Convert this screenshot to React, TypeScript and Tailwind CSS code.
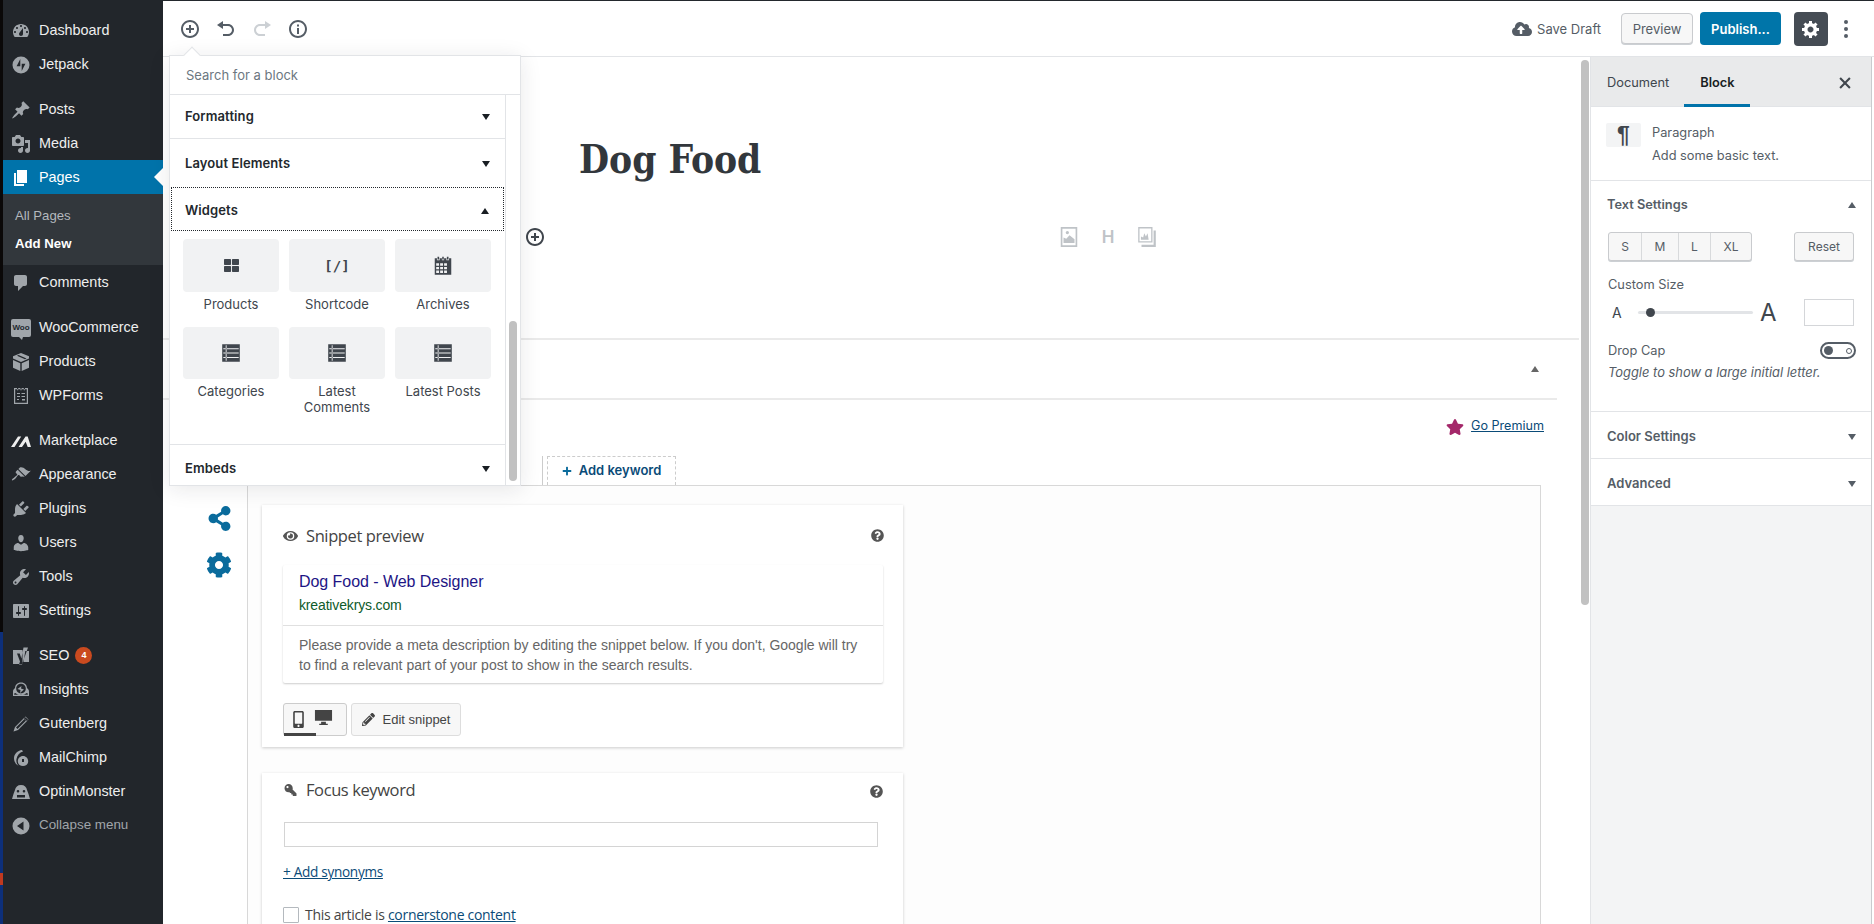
import React from "react";
import { FaCloudUploadAlt, FaEye, FaQuestionCircle, FaPencilAlt, FaMobileAlt, FaShareAlt, FaCog, FaStar, FaPlus, FaKey, FaThLarge } from "react-icons/fa";

const D = ({ d, className = "" }: { d: string; className?: string }) => (
  <svg viewBox="0 0 20 20" fill="currentColor" className={className}><path d={d} fillRule="evenodd" /></svg>
);

const P = {
  dash: "M3.76 16h12.48c1.1-1.37 1.76-3.11 1.76-5 0-4.42-3.58-8-8-8s-8 3.58-8 8c0 1.89.66 3.63 1.76 5zM10 4c.55 0 1 .45 1 1s-.45 1-1 1-1-.45-1-1 .45-1 1-1zM6 6c.55 0 1 .45 1 1s-.45 1-1 1-1-.45-1-1 .45-1 1-1zm8 0c.55 0 1 .45 1 1s-.45 1-1 1-1-.45-1-1 .45-1 1-1zm-5.37 5.55L12 7v6c0 1.1-.9 2-2 2s-2-.9-2-2c0-.57.24-1.08.63-1.45zM4 10c.55 0 1 .45 1 1s-.45 1-1 1-1-.45-1-1 .45-1 1-1zm12 0c.55 0 1 .45 1 1s-.45 1-1 1-1-.45-1-1 .45-1 1-1z",
  jet: "M10 1.5a8.5 8.5 0 1 0 0 17 8.5 8.5 0 0 0 0-17zM9.3 11.3H5.6l3.7-7.2zm1.4 4.6v-7.2h3.7z",
  post: "M10.44 3.02l1.82-1.82 6.36 6.35-1.83 1.82c-1.05-.68-2.48-.57-3.41.36l-.75.75c-.92.93-1.04 2.35-.35 3.41l-1.83 1.82-2.41-2.41-2.8 2.79c-.42.42-3.38 2.71-3.8 2.29s1.86-3.39 2.28-3.81l2.79-2.79L4.1 9.36l1.83-1.82c1.05.69 2.48.57 3.4-.36l.75-.75c.93-.92 1.05-2.35.36-3.41z",
  media: "M13 11V4c0-.55-.45-1-1-1h-1.67L9 1H5L3.67 3H2c-.55 0-1 .45-1 1v7c0 .55.45 1 1 1h10c.55 0 1-.45 1-1zM7 4.5c1.38 0 2.5 1.12 2.5 2.5S8.38 9.5 7 9.5 4.5 8.38 4.5 7 5.62 4.5 7 4.5zM14 6h5v10.5c0 1.38-1.12 2.5-2.5 2.5S14 17.88 14 16.5s1.12-2.5 2.5-2.5c.17 0 .34.02.5.05V9h-3V6zm-4 8.05V13h2v3.5c0 1.38-1.12 2.5-2.5 2.5S7 17.88 7 16.5 8.12 14 9.5 14c.17 0 .34.02.5.05z",
  page: "M6 15V2h10v13H6zm-1 1h8v2H3V5h2v11z",
  comment: "M5 2h9c1.1 0 2 .9 2 2v7c0 1.1-.9 2-2 2h-2l-5 5v-5H5c-1.1 0-2-.9-2-2V4c0-1.1.9-2 2-2z",
  box: "M10 1l8 3.2v2.2L10 10 2 6.4V4.200zM2 8l7.300 3.300V19L2 15.700zM18 8v7.700L10.700 19v-7.700zM6 3.700l8 3.500 1.500-.7-8-3.500z",
  form: "M3 2h14v16H3zM4.200 3.200v13.600h11.600V3.200zM6 2v2.200h1.200V2zm3.400 0v2.200h1.200V2zm3.400 0v2.200H14V2zM6 7h3v1H6zm4.500 0H14v1h-3.500zM6 10h3v1H6zm4.500 0H14v1h-3.500zM6 13h2v1H6zm5 0h3v1.500h-3z",
  market: "M0 16L7 5.500h3.200L3.500 16zM7.500 16L14.500 5.500h2.200L20 16h-3.300l-2-5.200L11 16z",
  brush: "M14.48 11.06L7.41 3.99l1.5-1.5c.5-.56 2.3-.47 3.51.32 1.21.8 1.43 1.28 2.91 2.1 1.18.64 2.45 1.26 4.45.85zm-.71.71L6.7 4.7 4.93 6.47c-.39.39-.39 1.02 0 1.41l1.06 1.06c.39.39.39 1.03 0 1.42-.6.6-1.43 1.11-2.21 1.69-.35.26-.7.53-1.01.84C1.43 13.23.5 14.84 1 15.34c.5.5 2.110-.43 3.440-1.760.31-.31.58-.66.84-1.010.58-.78 1.090-1.610 1.690-2.210.39-.39 1.020-.39 1.410 0l1.060 1.060c.39.39 1.020.39 1.410 0z",
  plug: "M13.11 4.36L9.87 7.6 8 5.730l3.240-3.240c.35-.34 1.050-.2 1.560.32.52.51.66 1.210.31 1.550zm-8 1.770l.91-1.120 9.010 9.010-1.190.84c-.71.71-2.630 1.160-3.820 1.160H6.140L4.900 17.260c-.59.59-1.540.59-2.120 0-.59-.58-.59-1.530 0-2.120l1.240-1.240v-3.880c0-1.130.4-3.190 1.090-3.890zm7.260 3.970l3.240-3.240c.34-.35 1.040-.21 1.550.31.52.51.66 1.210.31 1.550l-3.240 3.250z",
  user: "M10 9.250c-2.270 0-2.730-3.440-2.730-3.440C7 4.020 7.820 2 9.970 2c2.160 0 2.980 2.020 2.710 3.810 0 0-.41 3.440-2.680 3.440zm0 2.570L12.720 10c2.390 0 4.520 2.330 4.520 4.530v2.490s-3.650 1.130-7.240 1.130c-3.650 0-7.240-1.130-7.240-1.130v-2.490c0-2.250 1.940-4.480 4.470-4.480z",
  tool: "M16.680 9.770c-1.340 1.340-3.300 1.670-4.950.99l-5.410 6.520c-.99.99-2.590.99-3.580 0s-.99-2.590 0-3.570l6.520-5.420c-.68-1.650-.35-3.610.99-4.950 1.280-1.280 3.120-1.620 4.720-1.060l-2.890 2.890 2.820 2.820 2.860-2.870c.53 1.580.18 3.390-1.080 4.650zM3.810 16.210c.4.39 1.040.39 1.430 0 .4-.4.4-1.040 0-1.430-.39-.4-1.030-.4-1.430 0-.39.39-.39 1.030 0 1.430z",
  set: "M18 16V4c0-.55-.45-1-1-1H3c-.55 0-1 .45-1 1v12c0 .55.45 1 1 1h14c.55 0 1-.45 1-1zM8 11h1c.55 0 1 .45 1 1s-.45 1-1 1H8v1.500c0 .28-.22.5-.5.5s-.5-.22-.5-.5V13H6c-.55 0-1-.45-1-1s.45-1 1-1h1V5.500c0-.28.22-.5.5-.5s.5.22.5.5V11zm5-2h-1c-.55 0-1-.45-1-1s.45-1 1-1h1V5.500c0-.28.22-.5.5-.5s.5.22.5.5V7h1c.55 0 1 .45 1 1s-.45 1-1 1h-1v5.500c0 .28-.22.5-.5.5s-.5-.22-.5-.5V9z",
  seo: "M2 4h9.500v14H2zM12.500 1.500H17L11 18.500H8l1-3L6 7.500h2.700l1.700 5zM14.300 5H18v11h-5.500z",
  insight: "M10 2.500c3.800 0 6 2.700 6 5.800 1.300.7 2 1.900 2 3.200v4.500H2v-4.500c0-1.300.7-2.500 2-3.200 0-3.100 2.200-5.800 6-5.800zm0 1.200c-3 0-4.800 2.200-4.800 4.800 0 2.700 2 4.800 4.800 4.800s4.800-2.100 4.800-4.800c0-2.600-1.800-4.800-4.800-4.800zM10.500 6l-4 3 3 1-.5 3 4-3.500-3-1zM3.200 14.800h13.600v-1.200l-1.200-.6c-1.300 1.300-3.300 2-5.600 2s-4.300-.7-5.600-2l-1.200.6z",
  pencil: "M14.500 2.500l3 3L7 16l-4.500 1.500L4 13zM13.500 5L5 13.500 6.500 15 15 6.500zM12.800 4l3.200 3 1-1.500-3-2.500z",
  chimp: "M11 2c-4.500.5-8 4-8 8.500 0 3.200 2 6 4.500 7.300C5.700 16 5 13.500 5.500 11c.6-3.500 3-6.500 6.500-7.500zM12 8c-3 0-5.200 2.400-5.200 5.200S9 18 12 18s5.200-2 5.200-4.800S15 8 12 8zm-1 3h2v3h-2z",
  monster: "M10 3c3.500 0 5.500 2 6 5l1.500 4 1.500 5H1l1.500-5L4 8c.5-3 2.500-5 6-5zM7 8a1.300 1.300 0 1 0 0 2.600A1.300 1.300 0 0 0 7 8zm6 0a1.300 1.300 0 1 0 0 2.600A1.300 1.300 0 0 0 13 8zM6 13v2.500h8V13z",
  collapse: "M10 1.500a8.500 8.500 0 1 0 0 17 8.500 8.500 0 0 0 0-17zM12.500 5.500v9L6 10z",
  insert: "M10 1c-5 0-9 4-9 9s4 9 9 9 9-4 9-9-4-9-9-9zm0 16c-3.900 0-7-3.100-7-7s3.100-7 7-7 7 3.100 7 7-3.100 7-7 7zm1-11H9v3H6v2h3v3h2v-3h3V9h-3V6z",
  undo: "M12 5H7V2L1 6l6 4V7h5c2.200 0 4 1.800 4 4s-1.800 4-4 4H7v2h5c3.300 0 6-2.700 6-6s-2.700-6-6-6z",
  redo: "M8 5h5V2l6 4-6 4V7H8c-2.200 0-4 1.800-4 4s1.800 4 4 4h5v2H8c-3.300 0-6-2.700-6-6s2.700-6 6-6z",
  info: "M10 1c-5 0-9 4-9 9s4 9 9 9 9-4 9-9-4-9-9-9zm0 16c-3.900 0-7-3.100-7-7s3.100-7 7-7 7 3.100 7 7-3.100 7-7 7zM9 9h2v6H9zM9 5.500h2v2H9z",
  gear: "M18 12h-2.180c-.17.7-.44 1.350-.81 1.930l1.540 1.540-2.100 2.100-1.540-1.540c-.58.36-1.230.63-1.910.79V19H8v-2.180c-.68-.16-1.330-.43-1.910-.79l-1.540 1.540-2.120-2.120 1.540-1.540c-.36-.58-.63-1.230-.79-1.910H1V9.030h2.170c.16-.7.44-1.350.8-1.940L2.430 5.550l2.100-2.100 1.540 1.540c.58-.37 1.240-.64 1.930-.81V2h3v2.180c.68.16 1.330.43 1.910.79l1.540-1.540 2.120 2.120-1.540 1.540c.36.59.64 1.240.8 1.940H18V12zm-8.500 1.500c1.660 0 3-1.340 3-3s-1.340-3-3-3-3 1.340-3 3 1.340 3 3 3z",
  list: "M2 2h16v16H2zM3 5.600v.9h14v-.9zM3 9.600v.9h14v-.9zM3 13.600v.9h14v-.9zM5.200 3v14h.8V3z",
  cal: "M5 1.500h1.500V4H5zM9.300 1.500h1.400V4H9.300zM13.500 1.500H15V4h-1.500zM2.500 3h2v1.800h2.500V3h2v1.800h2V3h2v1.800h2.500V3h2v15h-15zM3.800 7.500v2.200h2.600V7.500zm3.600 0v2.200h2.600V7.500zm3.600 0v2.200h2.600V7.500zM3.800 10.800V13h2.600v-2.200zm3.600 0V13h2.600v-2.200zm3.600 0V13h2.600v-2.200zM3.800 14v2.300h2.600V14zm3.600 0v2.300h2.600V14zm3.600 0v2.300h2.600V14z",
  img: "M2.500 1h15v18h-15zM4 2.500v15h12v-15zM5 15.500v-5l2.500 1 3-3 4.500 3.500v3.500zM8.500 4.500a1.500 1.500 0 1 1 0 3 1.500 1.500 0 0 1 0-3z",
  gal: "M2 1h13v14H2zM3.200 2.200v11.600h10.600V2.200zM16 4h2v15H5v-2h11zM4.500 12.500V9.500l2 1 1-4 1.500 3 1.500-3 1 6z",
  desk: "M1 2h18v11.500H1zM7.500 14.500h5V16.500h2V18h-9v-1.500h2z",
};

const Woo = () => (
  <span className="relative flex h-[18px] w-[20px] items-center justify-center rounded-[2px] bg-[#a0a5aa] font-['Liberation_Sans',sans-serif] text-[8px] font-bold leading-none text-[#23282d]">
    Woo
    <span className="absolute bottom-[-3px] left-[8px] h-0 w-0 border-l-[3px] border-r-[1px] border-t-[3px] border-l-transparent border-r-transparent border-t-[#a0a5aa]" />
  </span>
);

type Row = { label: string; icon?: string; woo?: boolean; badge?: boolean; bright?: boolean };
const groupA: Row[] = [{ label: "Dashboard", icon: P.dash }, { label: "Jetpack", icon: P.jet }];
const groupB: Row[] = [{ label: "Posts", icon: P.post }, { label: "Media", icon: P.media }];
const groupC: Row[] = [{ label: "WooCommerce", woo: true }, { label: "Products", icon: P.box }, { label: "WPForms", icon: P.form }];
const groupD: Row[] = [
  { label: "Marketplace", icon: P.market, bright: true }, { label: "Appearance", icon: P.brush }, { label: "Plugins", icon: P.plug },
  { label: "Users", icon: P.user }, { label: "Tools", icon: P.tool }, { label: "Settings", icon: P.set },
];
const groupE: Row[] = [
  { label: "SEO", icon: P.seo, badge: true }, { label: "Insights", icon: P.insight }, { label: "Gutenberg", icon: P.pencil },
  { label: "MailChimp", icon: P.chimp }, { label: "OptinMonster", icon: P.monster },
];

const MenuRow = ({ r }: { r: Row }) => (
  <div className="flex h-[34px] items-center pt-[1px] text-[14.4px] text-[#eeeeee]">
    <span className={`flex w-[36px] justify-center ${r.bright ? "text-[#eeeeee]" : "text-[#a0a5aa]"}`}>
      {r.woo ? <Woo /> : <D d={r.icon!} className="h-[20px] w-[20px]" />}
    </span>
    <span>{r.label}</span>
    {r.badge && (
      <span className="ml-[6px] flex h-[17px] w-[17px] items-center justify-center rounded-full bg-[#ca4a1f] text-[9px] font-bold text-white">4</span>
    )}
  </div>
);

const AdminMenu = () => (
  <div className="flex w-[160px] shrink-0 flex-col bg-[#22262b] pt-[13px] font-['Liberation_Sans',sans-serif]">
    {groupA.map((r) => <MenuRow key={r.label} r={r} />)}
    <div className="h-[11px]" />
    {groupB.map((r) => <MenuRow key={r.label} r={r} />)}
    <div className="relative flex h-[34px] items-center bg-[#0073aa] pt-[1px] text-[14.4px] text-white">
      <span className="flex w-[36px] justify-center"><D d={P.page} className="h-[20px] w-[20px]" /></span>
      <span>Pages</span>
      <span className="absolute right-0 top-[8px] h-0 w-0 border-y-[9px] border-r-[9px] border-y-transparent border-r-white" />
    </div>
    <div className="h-[71px] bg-[#32373c] pl-[12px] pt-[12px] text-[13.2px]">
      <div className="h-[28px] leading-[20px] text-[#b4b9be]">All Pages</div>
      <div className="font-bold leading-[20px] text-white">Add New</div>
    </div>
    <MenuRow r={{ label: "Comments", icon: P.comment }} />
    <div className="h-[11px]" />
    {groupC.map((r) => <MenuRow key={r.label} r={r} />)}
    <div className="h-[11px]" />
    {groupD.map((r) => <MenuRow key={r.label} r={r} />)}
    <div className="h-[11px]" />
    {groupE.map((r) => <MenuRow key={r.label} r={r} />)}
    <div className="flex h-[34px] items-center pt-[1px] text-[13.4px] text-[#a0a5aa]">
      <span className="flex w-[36px] justify-center"><D d={P.collapse} className="h-[20px] w-[20px]" /></span>
      <span>Collapse menu</span>
    </div>
  </div>
);

const Chevron = ({ up = false, className = "" }: { up?: boolean; className?: string }) => (
  <span className={`h-0 w-0 border-x-[4px] border-x-transparent ${up ? "border-b-[6px] border-b-current" : "border-t-[6px] border-t-current"} ${className}`} />
);

const TopBar = () => (
  <div className="flex h-[56px] shrink-0 items-center border-b border-[#e2e4e7] bg-white pl-[17px] pr-[26px]">
    <div className="flex items-center gap-[16px] text-[#555d66]">
      <D d={P.insert} className="h-[20px] w-[20px]" />
      <D d={P.undo} className="h-[20px] w-[20px]" />
      <D d={P.redo} className="h-[20px] w-[20px] text-[#ccd0d4]" />
      <D d={P.info} className="h-[20px] w-[20px]" />
    </div>
    <div className="ml-auto flex items-center text-[13px] text-[#555d66]">
      <FaCloudUploadAlt className="mr-[5px] h-[20px] w-[20px]" />
      <span className="pt-[2px]">Save Draft</span>
      <span className="ml-[20px] flex h-[31px] w-[72px] items-center justify-center rounded-[4px] border border-[#c9cbce] bg-[#f7f7f7] pt-[2px] shadow-[0_1px_0_#ccd0d4]">Preview</span>
      <span className="ml-[7px] flex h-[33px] w-[81px] items-center justify-center rounded-[4px] bg-[#0075a9] pt-[2px] font-semibold text-white">Publish...</span>
      <span className="ml-[13px] flex h-[34px] w-[34px] items-center justify-center rounded-[4px] bg-[#454c54] text-white"><D d={P.gear} className="h-[20px] w-[20px]" /></span>
      <span className="ml-[16px] flex flex-col gap-[3px]">
        <span className="h-[4px] w-[4px] rounded-full bg-[#555d66]" />
        <span className="h-[4px] w-[4px] rounded-full bg-[#555d66]" />
        <span className="h-[4px] w-[4px] rounded-full bg-[#555d66]" />
      </span>
    </div>
  </div>
);

const Section = ({ title, up, className = "" }: { title: string; up?: boolean; className?: string }) => (
  <div className={`flex items-center justify-between pl-[15px] pr-[15px] text-[13px] font-semibold tracking-[0.1px] text-[#23282d] ${className}`}>
    <span>{title}</span>
    <Chevron up={up} className="text-[#191e23]" />
  </div>
);

const Tile = ({ icon, label, svg, h = "h-[53px]" }: { icon?: string; label: string; svg?: React.ReactNode; h?: string }) => (
  <div className="flex w-[96px] flex-col items-center">
    <div className={`flex w-full items-center justify-center rounded-[4px] bg-[#f1f2f3] text-[#40464d] ${h}`}>
      {svg ?? <D d={icon!} className="h-[22px] w-[22px]" />}
    </div>
    <div className="mt-[4px] text-center text-[13px] leading-[16px] text-[#40464d]">{label}</div>
  </div>
);

const Inserter = () => (
  <div className="absolute left-[6px] top-[-2px] z-20 h-[431px] w-[352px] border border-[#e2e4e7] bg-white shadow-[0_3px_20px_rgba(25,30,35,0.1)]">
    <span className="absolute left-[16px] top-[-7px] h-[12px] w-[12px] rotate-45 border-l border-t border-[#e2e4e7] bg-white" />
    <div className="relative flex h-[39px] items-center border-b border-[#e2e4e7] pl-[16px] pt-[2px] text-[13px] text-[#6c7781]">Search for a block</div>
    <div className="relative h-[390px] overflow-hidden">
      <div className="w-[336px] border-r border-[#e2e4e7]">
        <Section title="Formatting" className="h-[44px] border-b border-[#e2e4e7]" />
        <Section title="Layout Elements" className="h-[48px] pt-[1px]" />
        <Section title="Widgets" up className="mx-[1px] h-[44px] border border-dotted border-[#23282d] !pl-[13px] !pr-[14px] pt-[3px]" />
        <div className="px-[13px] pt-[8px]">
          <div className="flex gap-[10px]">
            <Tile label="Products" svg={<FaThLarge className="h-[15px] w-[15px]" />} />
            <Tile label="Shortcode" svg={<span className="font-['DejaVu_Sans_Mono',monospace] text-[14px] font-bold leading-none">[/]</span>} />
            <Tile icon={P.cal} label="Archives" />
          </div>
          <div className="mt-[15px] flex h-[117px] gap-[10px]">
            <Tile icon={P.list} label="Categories" h="h-[52px]" />
            <Tile icon={P.list} label="Latest Comments" h="h-[52px]" />
            <Tile icon={P.list} label="Latest Posts" h="h-[52px]" />
          </div>
        </div>
        <Section title="Embeds" className="h-[48px] border-t border-[#e2e4e7]" />
      </div>
      <div className="absolute right-[3px] top-[226px] h-[160px] w-[8px] rounded-full bg-[#c1c1c1]" />
    </div>
  </div>
);

const SnippetCard = () => (
  <div className="h-[242px] w-[641px] bg-white pl-[21px] pr-[20px] pt-[17px] shadow-[0_1px_3px_rgba(0,0,0,0.2)] font-['Open_Sans',sans-serif]">
    <div className="flex h-[28px] items-center justify-between text-[#444444]">
      <div className="flex items-center">
        <FaEye className="mr-[8px] h-[14px] w-[15px] text-[#555]" />
        <span className="text-[16.5px] tracking-[-0.4px]">Snippet preview</span>
      </div>
      <FaQuestionCircle className="mr-[-1px] mt-[-2px] h-[13px] w-[13px] text-[#555]" />
    </div>
    <div className="mt-[15px] h-[118px] rounded-[2px] bg-white font-['Liberation_Sans',sans-serif] shadow-[0_1px_2px_rgba(0,0,0,0.2)]">
      <div className="h-[61px] border-b border-[#e0e0e0] px-[16px] pt-[7px]">
        <div className="text-[16px] leading-[20px] tracking-[-0.05px] text-[#1d1585]">Dog Food - Web Designer</div>
        <div className="mt-[4px] text-[14px] leading-[18px] tracking-[-0.15px] text-[#0d5a2a]">kreativekrys.com</div>
      </div>
      <div className="whitespace-nowrap px-[16px] pt-[9px] text-[14px] leading-[20px] text-[#666666]">
        <div>Please provide a meta description by editing the snippet below. If you don't, Google will try</div>
        <div>to find a relevant part of your post to show in the search results.</div>
      </div>
    </div>
    <div className="mt-[20px] flex gap-[4px]">
      <div className="relative flex h-[33px] w-[64px] items-center rounded-[3px] border border-[#ccc] bg-[#f7f7f7] text-[#444]">
        <FaMobileAlt className="ml-[8px] h-[17px] w-[13px]" />
        <D d={P.desk} className="ml-[9px] mt-[-5px] h-[19px] w-[19px]" />
        <span className="absolute bottom-[-1px] left-0 h-[3px] w-[32px] bg-[#444]" />
      </div>
      <div className="flex h-[33px] w-[110px] items-center justify-center rounded-[3px] border border-[#ddd] bg-[#f7f7f7] font-['Liberation_Sans',sans-serif] text-[13px] text-[#444]">
        <FaPencilAlt className="mr-[8px] h-[13px] w-[13px]" />Edit snippet
      </div>
    </div>
  </div>
);

const FocusCard = () => (
  <div className="mt-[26px] h-[200px] w-[641px] bg-white pl-[21px] pr-[20px] pt-[3px] shadow-[0_1px_3px_rgba(0,0,0,0.2)] font-['Open_Sans',sans-serif] text-[#444]">
    <div className="flex h-[28px] items-center justify-between">
      <div className="flex items-center">
        <FaKey className="mr-[8px] h-[12px] w-[15px] -scale-x-100 text-[#555]" />
        <span className="text-[16.5px] tracking-[-0.4px]">Focus keyword</span>
      </div>
      <FaQuestionCircle className="mt-[2px] h-[13px] w-[13px] text-[#555]" />
    </div>
    <div className="ml-[1px] mt-[18px] h-[25px] w-[594px] border border-[#d4d4d4]" />
    <div className="mt-[15px] text-[13.6px] leading-[20px] tracking-[-0.3px] text-[#0a4b78] underline">+ Add synonyms</div>
    <div className="mt-[22px] flex items-center text-[14px] tracking-[-0.3px]">
      <span className="mr-[6px] h-[16px] w-[16px] rounded-[1px] border border-[#b4b9be]" />
      <span>This article is&nbsp;</span><span className="text-[#0a4b78] underline">cornerstone content</span>
    </div>
  </div>
);

const Editor = () => (
  <div className="relative flex-1 overflow-hidden">
    <div className="h-[283px] border-b-2 border-[#eaeaea] pl-[416px]">
      <h1 className="pt-[78px] font-['DejaVu_Serif_Condensed','DejaVu_Serif',serif] text-[38.5px] font-bold leading-[50px] text-[#32373c]">Dog Food</h1>
    </div>
    <div className="absolute left-[362px] top-[170px] text-[#40464d]"><D d={P.insert} className="h-[20px] w-[20px]" /></div>
    <div className="absolute left-[895px] top-[169px] flex w-[110px] items-center gap-[18px] text-[#bfc3c7]">
      <D d={P.img} className="h-[22px] w-[22px]" />
      <span className="w-[20px] text-center text-[17px] font-semibold leading-[20px]">H</span>
      <D d={P.gal} className="h-[22px] w-[22px]" />
    </div>
    <div className="mr-[22px] flex h-[60px] items-center justify-end border-b-2 border-[#eaeaea] pr-[18px] text-[#666]">
      <Chevron up className="text-[#666]" />
    </div>
    <div className="flex">
      <div className="flex w-[84px] shrink-0 flex-col items-end gap-[21px] pr-[15px] pt-[59px] text-[#0a6b9c]">
        <D d={P.list} className="h-[26px] w-[26px] text-[#0a6b9c]" />
        <FaShareAlt className="h-[25px] w-[25px]" />
        <FaCog className="h-[26px] w-[26px]" />
      </div>
      <div className="w-[1294px] pt-[17px]">
        <div className="mr-[-3px] flex justify-end text-[12.6px] text-[#0a4b78]">
          <FaStar className="mr-[7px] mt-[1px] h-[18px] w-[18px] text-[#a4286a]" />
          <span className="underline">Go Premium</span>
        </div>
        <div className="mt-[20px] flex h-[29px] justify-start pl-[294px]">
          <div className="h-full w-[2px] border-r border-[#ccc]" />
          <div className="ml-[4px] flex h-full w-[129px] items-center justify-center gap-[7px] whitespace-nowrap border border-b-0 border-dashed border-[#ccc] text-[13px] font-semibold text-[#0a4b78]">
            <FaPlus className="h-[10px] w-[10px] text-[#0a6b9c]" />Add keyword
          </div>
        </div>
        <div className="h-[500px] border border-[#d8d8d8] bg-[#fdfdfd] pl-[14px] pt-[19px]">
          <SnippetCard />
          <FocusCard />
        </div>
      </div>
    </div>
  </div>
);

const PanelHead = ({ title, up }: { title: string; up?: boolean }) => (
  <div className="flex h-[47px] items-center justify-between border-b border-[#e2e4e7] pl-[16px] pr-[15px] pt-[3px] text-[13px] font-semibold text-[#555d66]">
    <span>{title}</span>
    <Chevron up={up} className="text-[#555d66]" />
  </div>
);

const Settings = () => (
  <div className="flex w-[280px] shrink-0 flex-col bg-[#f3f4f5] text-[12.8px] text-[#555d66]">
    <div className="bg-white">
      <div className="relative flex h-[50px] items-center border-b border-[#e2e4e7] bg-[#e9eaeb] pl-[16px] pr-[19px] pt-[3px]">
        <span className="text-[#40464d]">Document</span>
        <span className="ml-[31px] font-semibold text-[#191e23]">Block</span>
        <span className="absolute bottom-[-1px] left-[93px] h-[3px] w-[66px] bg-[#0073aa]" />
        <svg viewBox="0 0 20 20" className="ml-auto h-[14px] w-[14px]" stroke="#40464d" strokeWidth="3"><path d="M3 3l14 14M17 3L3 17" /></svg>
      </div>
      <div className="flex h-[74px] border-b border-[#e2e4e7] pl-[15px] pt-[16px]">
        <div className="flex h-[24px] w-[35px] items-center justify-center rounded-[2px] bg-[#f3f4f5] font-['Liberation_Sans',sans-serif] text-[23px] font-bold leading-none text-[#40464d]">¶</div>
        <div className="ml-[11px] mt-[-2px] leading-[23px]">
          <div>Paragraph</div>
          <div>Add some basic text.</div>
        </div>
      </div>
      <div className="h-[231px] border-b border-[#e2e4e7] pl-[16px] pr-[16px]">
        <div className="flex h-[47px] items-center justify-between font-semibold">
          <span>Text Settings</span><Chevron up className="mr-[-1px] text-[#555d66]" />
        </div>
        <div className="mt-[4px] flex items-start justify-between pl-[1px] pr-[1px]">
          <div className="flex h-[29px] rounded-[3px] border border-[#c9cbce] bg-[#f7f7f7] shadow-[0_1px_0_#ccd0d4] text-[12px]">
            <span className="flex w-[33px] items-center justify-center border-r border-[#d8dadc]">S</span>
            <span className="flex w-[37px] items-center justify-center border-r border-[#d8dadc]">M</span>
            <span className="flex w-[32px] items-center justify-center border-r border-[#d8dadc]">L</span>
            <span className="flex w-[40px] items-center justify-center">XL</span>
          </div>
          <span className="flex h-[29px] w-[60px] items-center justify-center rounded-[3px] border border-[#c9cbce] bg-[#f7f7f7] text-[12px] shadow-[0_1px_0_#ccd0d4]">Reset</span>
        </div>
        <div className="mt-[15px] pl-[1px] leading-[18px]">Custom Size</div>
        <div className="mt-[5px] flex h-[27px] items-center pl-[5px]">
          <span className="w-[26px] text-[14px] text-[#40464d]">A</span>
          <div className="relative h-[3px] w-[115px] rounded-full bg-[#e2e4e7]">
            <span className="absolute left-[8px] top-[-3px] h-[9px] w-[9px] rounded-full bg-[#40464d]" />
          </div>
          <span className="ml-[7px] w-[44px] text-[24px] leading-none text-[#40464d]">A</span>
          <span className="h-[27px] w-[50px] border border-[#d4d6d9]" />
        </div>
        <div className="mt-[15px] flex items-center justify-between pl-[1px]">
          <span>Drop Cap</span>
          <span className="mr-[-1px] flex h-[17px] w-[36px] items-center justify-between rounded-full border-2 border-[#555d66] px-[2px]">
            <span className="h-[9px] w-[9px] rounded-full bg-[#555d66]" />
            <span className="h-[6px] w-[6px] rounded-full border border-[#555d66]" />
          </span>
        </div>
        <div className="mt-[4px] pl-[1px] text-[12.9px] italic leading-[18px]">Toggle to show a large initial letter.</div>
      </div>
      <PanelHead title="Color Settings" />
      <PanelHead title="Advanced" />
    </div>
  </div>
);

export default function App() {
  return (
    <div className="relative flex h-[924px] w-[1874px] overflow-hidden bg-white font-['Inter',sans-serif]">
      <div className="flex w-[3px] shrink-0 flex-col">
        <div className="h-[632px] bg-[#0a0808]" />
        <div className="h-[241px] bg-[#0d2f7a]" />
        <div className="h-[12px] bg-[#c0391f]" />
        <div className="flex-1 bg-[#0d2f7a]" />
      </div>
      <AdminMenu />
      <div className="flex min-w-0 flex-1 flex-col border-t border-[#23282d]">
        <TopBar />
        <div className="relative flex min-h-0 flex-1">
          <Inserter />
          <Editor />
          <div className="relative w-[12px] shrink-0 border-r border-[#e2e4e7]">
            <div className="ml-[2px] mt-[3px] h-[545px] w-[8px] rounded-full bg-[#c1c1c1]" />
          </div>
          <Settings />
          <div className="w-[3px] shrink-0 border-l border-[#c9cbce]" />
        </div>
      </div>
    </div>
  );
}
